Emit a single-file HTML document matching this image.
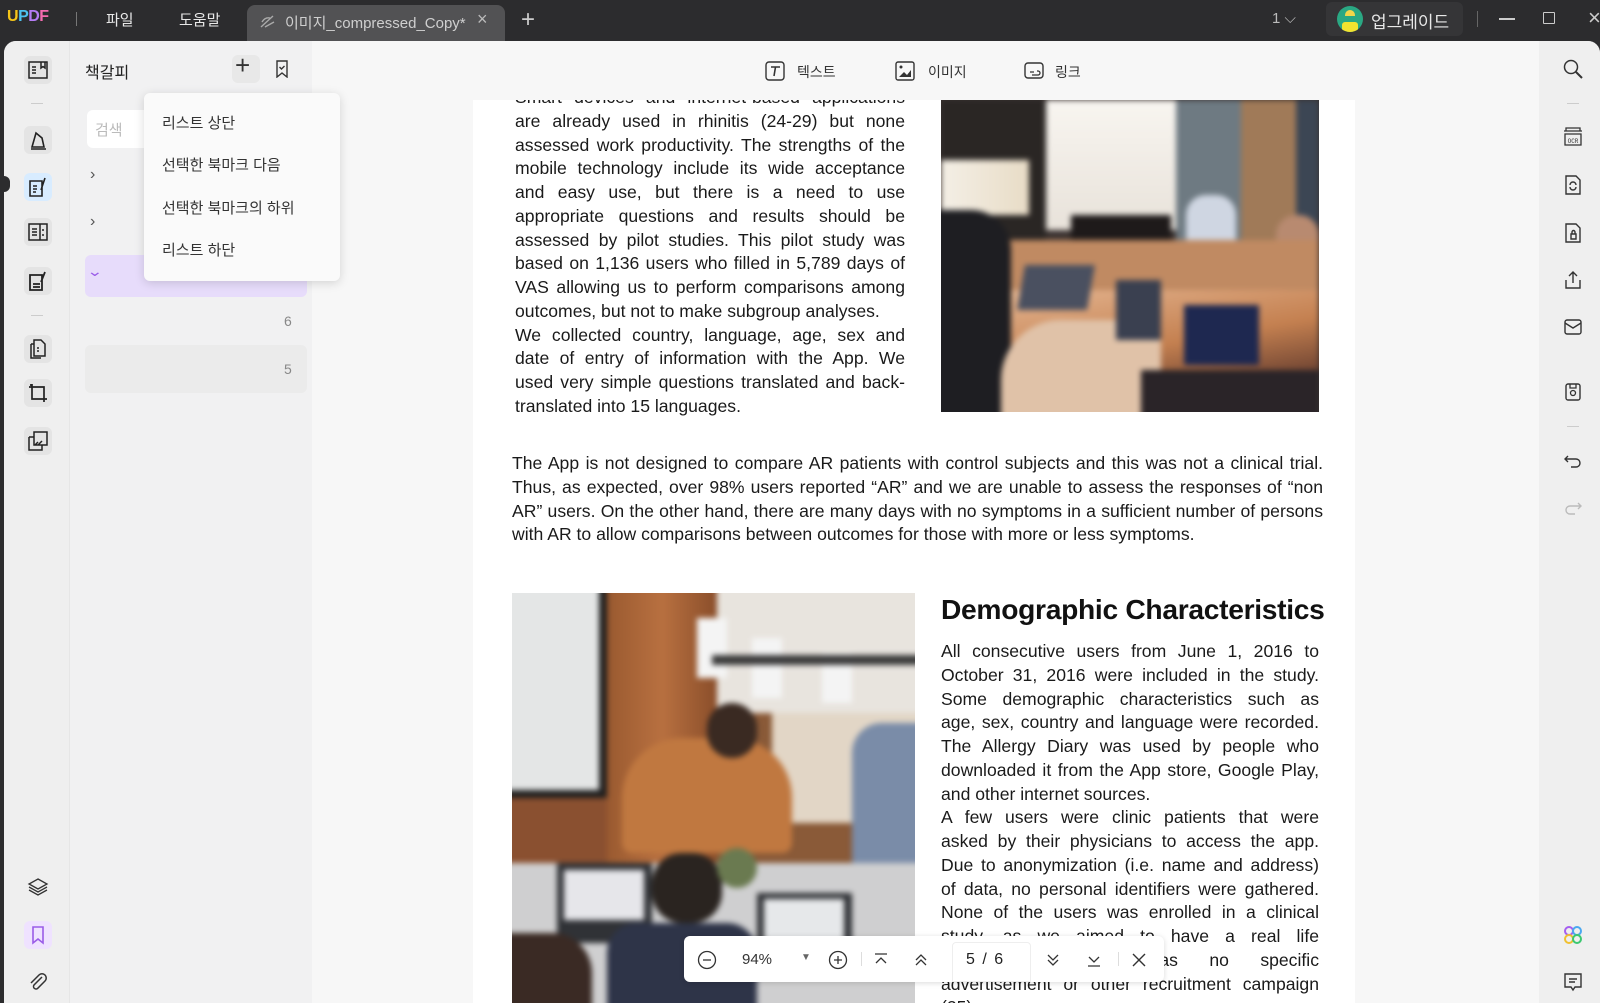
<!DOCTYPE html>
<html><head><meta charset="utf-8">
<style>
*{margin:0;padding:0;box-sizing:border-box}
body{width:1600px;height:1003px;overflow:hidden;background:#2c2c2e;font-family:"Liberation Sans","Noto Sans CJK KR",sans-serif;position:relative}
.abs{position:absolute}
.tb{color:#e8e8e8;font-size:15px}
.main{position:absolute;left:4px;top:41px;width:1596px;height:962px;background:#f7f7f7;border-radius:12px 12px 0 0;overflow:hidden}
.rail{position:absolute;left:0;top:0;width:66px;height:962px;background:#efefef;border-right:1px solid #e6e6e6}
.panel{position:absolute;left:66px;top:0;width:242px;height:962px;background:#f1f1f2}
.rrail{position:absolute;left:1535px;top:0;width:61px;height:962px;background:#efefef}
.page{position:absolute;left:473px;top:100px;width:882px;height:903px;background:#fff}
.txt{font-family:"Liberation Sans",sans-serif;color:#1a1a1a;font-size:17.6px;line-height:23.75px;text-align:justify;text-align-last:justify;position:absolute}
.txt div{white-space:nowrap;text-align:justify;text-align-last:justify}
.ic{position:absolute;width:22px;height:22px}
.menu div{position:absolute;left:18px;font-size:15px;color:#333}
.blur{position:absolute;left:-10px;top:-10px;right:-10px;bottom:-10px;filter:blur(3px)}
.blur>div{position:absolute}
</style></head><body>
<div class="abs" style="left:7px;top:8px;font-weight:bold;font-size:16px;letter-spacing:-0.5px"><span style="color:#f5c518">U</span><span style="color:#4cc3f0">P</span><span style="color:#b57cf5">D</span><span style="color:#f56bb0">F</span></div>
<div class="abs" style="left:76px;top:12px;width:1px;height:14px;background:#777"></div>
<div class="abs tb" style="left:106px;top:9px">파일</div>
<div class="abs tb" style="left:179px;top:9px">도움말</div>
<div class="abs" style="left:247px;top:5px;width:258px;height:36px;background:#525254;border-radius:8px 8px 0 0"></div>
<svg class="abs" style="left:259px;top:14px" width="18" height="16" viewBox="0 0 18 16"><path d="M2 13 L14 2 M3 8 Q6 3 11 4 M6 13 L15 8" stroke="#aaa" stroke-width="1.4" fill="none"/></svg>
<div class="abs" style="left:285px;top:12px;color:#cfcfcf;font-size:15px">이미지_compressed_Copy*</div>
<div class="abs" style="left:477px;top:9px;color:#bbb;font-size:18px">×</div>
<div class="abs" style="left:521px;top:6px;color:#ccc;font-size:24px;font-weight:300">+</div>
<div class="abs tb" style="left:1272px;top:10px;color:#bbb">1 ⌵</div>
<div class="abs" style="left:1326px;top:2px;width:137px;height:34px;background:#353537;border-radius:6px"></div>
<div class="abs" style="left:1337px;top:6px;width:26px;height:26px;border-radius:50%;background:#2aa883;overflow:hidden"><div style="position:absolute;left:5px;top:16px;width:16px;height:10px;background:#f2e330;border-radius:3px"></div><div style="position:absolute;left:8px;top:4px;width:10px;height:6px;background:#f2d64a;border-radius:5px 5px 0 0"></div></div>
<div class="abs tb" style="left:1371px;top:8px;font-size:17px">업그레이드</div>
<div class="abs" style="left:1477px;top:11px;width:1px;height:16px;background:#666"></div>
<div class="abs" style="left:1499px;top:18px;width:16px;height:1.5px;background:#ccc"></div>
<div class="abs" style="left:1543px;top:12px;width:12px;height:12px;border:1.5px solid #ccc;border-radius:1px"></div>
<div class="abs" style="left:1588px;top:5px;color:#ccc;font-size:22px">×</div>

<div class="main">
 <div class="rail">
  <div class="abs" style="left:20px;top:15px;width:28px;height:28px;background:#e4e4e4;border-radius:6px"></div>
  <svg class="ic" style="left:23px;top:18px" viewBox="0 0 22 22"><path d="M2 3h18v16H2z M5 8h4 M5 11h4 M5 14h4 M14 3v6l2-1.5 2 1.5V3" stroke="#222" stroke-width="1.5" fill="none"/></svg>
  <div class="abs" style="left:27px;top:62px;width:12px;height:1px;background:#ccc"></div>
  <div class="abs" style="left:20px;top:85px;width:28px;height:28px;background:#e4e4e4;border-radius:6px"></div>
  <svg class="ic" style="left:23px;top:88px" viewBox="0 0 22 22"><path d="M5 18 L9 4 L15 9 L17 18z M4 20h15" stroke="#222" stroke-width="1.6" fill="none"/></svg>
  <div class="abs" style="left:20px;top:132px;width:28px;height:28px;background:#d8ecff;border-radius:6px"></div>
  <svg class="ic" style="left:23px;top:135px" viewBox="0 0 22 22"><path d="M3 5h12v15H3z M6 10h4 M6 13h4 M6 16h3 M18 2 L14 14" stroke="#222" stroke-width="1.6" fill="none"/></svg>
  <div class="abs" style="left:0;top:135px;width:6px;height:16px;background:#2c2c2e;border-radius:0 8px 8px 0"></div>
  <div class="abs" style="left:20px;top:177px;width:28px;height:28px;background:#e4e4e4;border-radius:6px"></div>
  <svg class="ic" style="left:23px;top:180px" viewBox="0 0 22 22"><path d="M2 3h18v16H2z M13 3v16 M5 8h5 M5 11h5 M5 14h5 M16 8v2 M16 13v2" stroke="#222" stroke-width="1.5" fill="none"/></svg>
  <div class="abs" style="left:20px;top:226px;width:28px;height:28px;background:#e4e4e4;border-radius:6px"></div>
  <svg class="ic" style="left:23px;top:229px" viewBox="0 0 22 22"><path d="M3 5h12v15H3z M6 14h7 M6 17h7 M18 2 L14 12" stroke="#222" stroke-width="1.8" fill="none"/></svg>
  <div class="abs" style="left:27px;top:274px;width:12px;height:1px;background:#ccc"></div>
  <div class="abs" style="left:20px;top:294px;width:28px;height:28px;background:#e4e4e4;border-radius:6px"></div>
  <svg class="ic" style="left:23px;top:297px" viewBox="0 0 22 22"><path d="M7 2h7l4 4v12H7z M4 6h3 M4 6v14h10 M10 10h2 M10 13h2" stroke="#222" stroke-width="1.5" fill="none"/></svg>
  <div class="abs" style="left:20px;top:338px;width:28px;height:28px;background:#e4e4e4;border-radius:6px"></div>
  <svg class="ic" style="left:23px;top:341px" viewBox="0 0 22 22"><path d="M5 2v15h15 M2 5h15v15 M3 3l2 0" stroke="#222" stroke-width="1.7" fill="none"/></svg>
  <div class="abs" style="left:20px;top:386px;width:28px;height:28px;background:#e4e4e4;border-radius:6px"></div>
  <svg class="ic" style="left:23px;top:389px" viewBox="0 0 22 22"><path d="M7 2h13v13H7z M2 7h5 M2 7v13h13v-5 M8 15l3-3 M11 15l4-4" stroke="#222" stroke-width="1.5" fill="none"/></svg>
  <svg class="ic" style="left:23px;top:835px" viewBox="0 0 22 22"><path d="M11 3 L20 8 L11 13 L2 8z M2 11 L11 16 L20 11 M2 14 L11 19 L20 14" stroke="#333" stroke-width="1.3" fill="none"/></svg>
  <div class="abs" style="left:20px;top:880px;width:28px;height:28px;background:#efe2ff;border-radius:6px"></div>
  <svg class="ic" style="left:23px;top:883px" viewBox="0 0 22 22"><path d="M6 3h10v16l-5-4-5 4z" stroke="#9a5ce8" stroke-width="1.6" fill="none"/></svg>
  <svg class="ic" style="left:23px;top:930px" viewBox="0 0 22 22"><path d="M15 6 L7 14 a2.5 2.5 0 0 0 3.5 3.5 L18 10 a4 4 0 0 0-6-6 L4 12" stroke="#333" stroke-width="1.5" fill="none"/></svg>
 </div>
 <div class="panel">
  <div class="abs" style="left:15px;top:18px;font-size:16px;color:#222">책갈피</div>
  <div class="abs" style="left:162px;top:14px;width:28px;height:28px;background:#e8e8e8;border-radius:6px"></div>
  <div class="abs" style="left:165px;top:9px;font-size:26px;color:#333;font-weight:300">+</div>
  <svg class="abs" style="left:205px;top:19px" width="14" height="18" viewBox="0 0 14 18"><path d="M2 1h10v16l-5-4-5 4z M4.5 7l2 2 3-3" stroke="#333" stroke-width="1.4" fill="none"/></svg>
  <div class="abs" style="left:17px;top:69px;width:80px;height:38px;background:#fff;border-radius:6px"></div>
  <div class="abs" style="left:25px;top:78px;color:#bbb;font-size:15px">검색</div>
  <div class="abs" style="left:20px;top:125px;color:#555;font-size:16px">›</div>
  <div class="abs" style="left:20px;top:172px;color:#555;font-size:16px">›</div>
  <div class="abs" style="left:15px;top:214px;width:222px;height:42px;background:#e7dcfb;border-radius:6px"></div>
  <div class="abs" style="left:19px;top:222px;color:#9a5ce8;font-size:14px;transform:scaleX(1.4)">⌄</div>
  <div class="abs" style="left:214px;top:272px;color:#888;font-size:14px">6</div>
  <div class="abs" style="left:15px;top:304px;width:222px;height:48px;background:#ebebeb;border-radius:6px"></div>
  <div class="abs" style="left:214px;top:320px;color:#888;font-size:14px">5</div>
 </div>
 <div class="menu abs" style="left:140px;top:52px;width:196px;height:188px;background:#fafafa;border-radius:6px;box-shadow:0 2px 10px rgba(0,0,0,0.15)">
  <div style="top:19px">리스트 상단</div>
  <div style="top:61px">선택한 북마크 다음</div>
  <div style="top:104px">선택한 북마크의 하위</div>
  <div style="top:146px">리스트 하단</div>
 </div>
 <svg class="abs" style="left:760px;top:19px" width="22" height="22" viewBox="0 0 22 22"><rect x="2" y="2" width="18" height="18" rx="3" stroke="#333" stroke-width="1.4" fill="none"/><path d="M7 7h9 M11.5 7 L10 16" stroke="#333" stroke-width="1.6" fill="none"/></svg>
 <div class="abs" style="left:793px;top:21px;font-size:14px;color:#333">텍스트</div>
 <svg class="abs" style="left:890px;top:19px" width="22" height="22" viewBox="0 0 22 22"><rect x="2" y="2" width="18" height="18" rx="2" stroke="#333" stroke-width="1.4" fill="none"/><path d="M5 17 L10 12 L13 15 L17 10 V17z" fill="#333"/><circle cx="7" cy="7" r="1.5" fill="#333"/></svg>
 <div class="abs" style="left:924px;top:21px;font-size:14px;color:#333">이미지</div>
 <svg class="abs" style="left:1019px;top:19px" width="22" height="22" viewBox="0 0 22 22"><rect x="2" y="3" width="18" height="15" rx="3" stroke="#333" stroke-width="1.4" fill="none"/><path d="M7 12h4 M9 15h6 a2 2 0 0 0 0-4h-1" stroke="#333" stroke-width="1.3" fill="none"/></svg>
 <div class="abs" style="left:1051px;top:21px;font-size:14px;color:#333">링크</div>
 <div class="rrail">
  <svg class="ic" style="left:23px;top:17px" viewBox="0 0 22 22"><circle cx="9" cy="9" r="6.5" stroke="#333" stroke-width="1.5" fill="none"/><path d="M14 14 L20 20" stroke="#333" stroke-width="2"/></svg>
  <div class="abs" style="left:28px;top:62px;width:12px;height:1px;background:#ccc"></div>
  <svg class="ic" style="left:23px;top:85px" viewBox="0 0 22 22"><path d="M2 5h18 M4 5 V2h14v3 M3 8h16v11H3z" stroke="#333" stroke-width="1.3" fill="none"/><text x="11" y="17" font-size="6" text-anchor="middle" font-family="Liberation Mono" fill="#333">OCR</text></svg>
  <svg class="ic" style="left:23px;top:133px" viewBox="0 0 22 22"><path d="M4 2h10l4 4v14H4z M8 11 a3 3 0 0 1 6 0 M14 13 a3 3 0 0 1-6 0" stroke="#333" stroke-width="1.4" fill="none"/></svg>
  <svg class="ic" style="left:23px;top:181px" viewBox="0 0 22 22"><path d="M4 2h10l4 4v14H4z M9 12h5v5H9z M10 12v-2 a1.5 1.5 0 0 1 3 0v2" stroke="#333" stroke-width="1.4" fill="none"/></svg>
  <svg class="ic" style="left:23px;top:228px" viewBox="0 0 22 22"><path d="M11 3v11 M7 7l4-4 4 4 M4 11v8h14v-8" stroke="#333" stroke-width="1.4" fill="none"/></svg>
  <svg class="ic" style="left:23px;top:275px" viewBox="0 0 22 22"><rect x="3" y="4" width="16" height="14" rx="2" stroke="#333" stroke-width="1.4" fill="none"/><path d="M3 7l8 5 8-5" stroke="#333" stroke-width="1.4" fill="none"/></svg>
  <svg class="ic" style="left:23px;top:340px" viewBox="0 0 22 22"><rect x="4" y="3" width="14" height="16" rx="2" stroke="#333" stroke-width="1.4" fill="none"/><circle cx="11" cy="12" r="2.5" stroke="#333" stroke-width="1.3" fill="none"/><path d="M8 3v4h6V3" stroke="#333" stroke-width="1.3" fill="none"/></svg>
  <div class="abs" style="left:28px;top:385px;width:12px;height:1px;background:#ccc"></div>
  <svg class="ic" style="left:23px;top:409px" viewBox="0 0 22 22"><path d="M6 6 L3 9 L6 12 M3 9 H14 a4 4 0 0 1 0 8 H9" stroke="#333" stroke-width="1.4" fill="none"/></svg>
  <svg class="ic" style="left:23px;top:456px" viewBox="0 0 22 22"><path d="M16 6 L19 9 L16 12 M19 9 H8 a4 4 0 0 0 0 8 H13" stroke="#bbb" stroke-width="1.4" fill="none"/></svg>
  <svg class="ic" style="left:23px;top:883px" viewBox="0 0 22 22"><circle cx="7" cy="7" r="4" stroke="#a55ef0" stroke-width="2" fill="none"/><circle cx="15" cy="7" r="4" stroke="#4aa8f0" stroke-width="2" fill="none"/><circle cx="7" cy="15" r="4" stroke="#f0c030" stroke-width="2" fill="none"/><circle cx="15" cy="15" r="4" stroke="#3cc870" stroke-width="2" fill="none"/></svg>
  <svg class="ic" style="left:23px;top:930px" viewBox="0 0 22 22"><path d="M3 3h16v13h-6l-2 3-2-3H3z M7 8h8 M7 11h6" stroke="#333" stroke-width="1.4" fill="none"/></svg>
 </div>
</div>

<div class="page" style="top:100px"></div>
<div class="abs" style="left:473px;top:100px;width:882px;height:903px;overflow:hidden">
 <div class="txt" style="left:42px;top:-14px;width:390px">
  <div>Smart devices and internet-based applications</div>
  <div>are already used in rhinitis (24-29) but none</div>
  <div>assessed work productivity. The strengths of the</div>
  <div>mobile technology include its wide acceptance</div>
  <div>and easy use, but there is a need to use</div>
  <div>appropriate questions and results should be</div>
  <div>assessed by pilot studies. This pilot study was</div>
  <div>based on 1,136 users who filled in 5,789 days of</div>
  <div>VAS allowing us to perform comparisons among</div>
  <div style="text-align-last:left">outcomes, but not to make subgroup analyses.</div>
  <div>We collected country, language, age, sex and</div>
  <div>date of entry of information with the App. We</div>
  <div>used very simple questions translated and back-</div>
  <div style="text-align-last:left">translated into 15 languages.</div>
 </div>
 <div class="txt" style="left:39px;top:352px;width:811px">
  <div>The App is not designed to compare AR patients with control subjects and this was not a clinical trial.</div>
  <div>Thus, as expected, over 98% users reported “AR” and we are unable to assess the responses of “non</div>
  <div>AR” users. On the other hand, there are many days with no symptoms in a sufficient number of persons</div>
  <div style="text-align-last:left">with AR to allow comparisons between outcomes for those with more or less symptoms.</div>
 </div>
 <div class="abs" style="left:468px;top:493px;font-weight:bold;font-size:28.2px;color:#111;white-space:nowrap;letter-spacing:-0.3px">Demographic Characteristics</div>
 <div class="txt" style="left:468px;top:540px;width:378px">
  <div>All consecutive users from June 1, 2016 to</div>
  <div>October 31, 2016 were included in the study.</div>
  <div>Some demographic characteristics such as</div>
  <div>age, sex, country and language were recorded.</div>
  <div>The Allergy Diary was used by people who</div>
  <div>downloaded it from the App store, Google Play,</div>
  <div style="text-align-last:left">and other internet sources.</div>
  <div>A few users were clinic patients that were</div>
  <div>asked by their physicians to access the app.</div>
  <div>Due to anonymization (i.e. name and address)</div>
  <div>of data, no personal identifiers were gathered.</div>
  <div>None of the users was enrolled in a clinical</div>
  <div>study, as we aimed to have a real life</div>
  <div>study and there was no specific</div>
  <div>advertisement or other recruitment campaign</div>
  <div style="text-align-last:left">(25).</div>
 </div>
 <!-- photo 1 -->
 <div class="abs" style="left:468px;top:0;width:378px;height:312px;background:#3a3230;overflow:hidden">
  <div class="blur">
  <div style="left:10px;top:10px;width:105px;height:312px;background:#2a2624"></div>
  <div style="left:10px;top:70px;width:88px;height:55px;background:linear-gradient(90deg,#f4efe6,#e8dcc6)"></div>
  <div style="left:115px;top:10px;width:130px;height:130px;background:linear-gradient(#f8f5f0,#e8e2da)"></div>
  <div style="left:245px;top:10px;width:65px;height:140px;background:#6e7a82"></div>
  <div style="left:310px;top:10px;width:55px;height:170px;background:#a07a58"></div>
  <div style="left:365px;top:10px;width:23px;height:170px;background:#3c4654"></div>
  <div style="left:140px;top:125px;width:100px;height:45px;background:#1e1a1a"></div>
  <div style="left:255px;top:105px;width:50px;height:70px;background:#cfd6e2;border-radius:20px 20px 0 0"></div>
  <div style="left:345px;top:125px;width:43px;height:90px;background:#b88a70;border-radius:20px 20px 0 0"></div>
  <div style="left:50px;top:150px;width:338px;height:60px;background:#c08a62"></div>
  <div style="left:50px;top:200px;width:338px;height:85px;background:linear-gradient(170deg,#e6b894,#c48050 60%,#6a4030)"></div>
  <div style="left:0;top:120px;width:80px;height:212px;background:#1e1e22;border-radius:0 40px 0 0"></div>
  <div style="left:70px;top:230px;width:160px;height:102px;background:#e0c2a8;border-radius:60px 0 0 0"></div>
  <div style="left:90px;top:175px;width:70px;height:45px;background:#4a5060;transform:skewX(-10deg)"></div>
  <div style="left:185px;top:190px;width:45px;height:60px;background:#3a4050"></div>
  <div style="left:253px;top:215px;width:75px;height:60px;background:#1e2850"></div>
  <div style="left:210px;top:280px;width:178px;height:52px;background:#2a2428"></div>
  </div>
 </div>
 <!-- photo 2 -->
 <div class="abs" style="left:39px;top:493px;width:403px;height:410px;background:#8a5a38;overflow:hidden">
  <div class="blur">
  <div style="left:0;top:0;width:105px;height:215px;background:#e4e6e6;border-right:8px solid #1e1e1e;border-bottom:8px solid #1e1e1e"></div>
  <div style="left:105px;top:0;width:110px;height:300px;background:linear-gradient(90deg,#9a5a30,#b87040,#8a4e2a)"></div>
  <div style="left:215px;top:0;width:208px;height:130px;background:#e8e4de"></div>
  <div style="left:195px;top:35px;width:30px;height:60px;background:#f4f4f4"></div>
  <div style="left:250px;top:55px;width:30px;height:60px;background:#f4f4f4"></div>
  <div style="left:320px;top:70px;width:30px;height:50px;background:#f4f4f4"></div>
  <div style="left:210px;top:72px;width:213px;height:10px;background:#3a3a3a"></div>
  <div style="left:270px;top:130px;width:153px;height:110px;background:#e2d6c6"></div>
  <div style="left:0;top:215px;width:105px;height:90px;background:#8a5030"></div>
  <div style="left:120px;top:155px;width:170px;height:115px;background:#c07840;border-radius:60px 60px 10px 10px"></div>
  <div style="left:205px;top:120px;width:50px;height:55px;background:#3a2a22;border-radius:25px"></div>
  <div style="left:350px;top:140px;width:73px;height:170px;background:#7a8ca8;border-radius:30px 0 0 0"></div>
  <div style="left:0;top:280px;width:423px;height:150px;background:#cfcfd0"></div>
  <div style="left:55px;top:280px;width:95px;height:80px;background:#303236"></div>
  <div style="left:62px;top:287px;width:80px;height:50px;background:#e6e6ea"></div>
  <div style="left:255px;top:310px;width:95px;height:70px;background:#303236"></div>
  <div style="left:262px;top:316px;width:80px;height:48px;background:#e6e8ea"></div>
  <div style="left:150px;top:270px;width:70px;height:70px;background:#2a2420;border-radius:30px"></div>
  <div style="left:105px;top:340px;width:150px;height:90px;background:#2e3448;border-radius:30px 30px 0 0"></div>
  <div style="left:215px;top:265px;width:40px;height:40px;background:#6a7a50;border-radius:20px"></div>
  <div style="left:0;top:350px;width:90px;height:80px;background:#3a2a24;border-radius:0 40px 0 0"></div>
  </div>
 </div>
</div>

<div class="abs" style="left:684px;top:936px;width:480px;height:46px;background:#fff;border-radius:6px;box-shadow:0 1px 6px rgba(0,0,0,0.15)">
 <svg class="abs" style="left:13px;top:14px" width="20" height="20" viewBox="0 0 20 20"><circle cx="10" cy="10" r="8.5" stroke="#333" stroke-width="1.3" fill="none"/><path d="M6 10h8" stroke="#333" stroke-width="1.3"/></svg>
 <div class="abs" style="left:58px;top:15px;font-size:15px;color:#333">94%</div>
 <div class="abs" style="left:117px;top:16px;font-size:10px;color:#666">▼</div>
 <svg class="abs" style="left:144px;top:14px" width="20" height="20" viewBox="0 0 20 20"><circle cx="10" cy="10" r="8.5" stroke="#333" stroke-width="1.3" fill="none"/><path d="M6 10h8 M10 6v8" stroke="#333" stroke-width="1.3"/></svg>
 <div class="abs" style="left:177px;top:16px;width:1px;height:14px;background:#ddd"></div>
 <svg class="abs" style="left:188px;top:15px" width="18" height="18" viewBox="0 0 18 18"><path d="M3 3h12 M4 12 L9 7 L14 12" stroke="#333" stroke-width="1.3" fill="none"/></svg>
 <svg class="abs" style="left:228px;top:15px" width="18" height="18" viewBox="0 0 18 18"><path d="M4 9 L9 4 L14 9 M4 14 L9 9 L14 14" stroke="#333" stroke-width="1.3" fill="none"/></svg>
 <div class="abs" style="left:268px;top:6px;width:79px;height:40px;border:1px solid #eee;border-radius:4px 4px 0 0"></div>
 <div class="abs" style="left:282px;top:15px;font-size:16px;color:#222;word-spacing:3px">5 / 6</div>
 <svg class="abs" style="left:360px;top:15px" width="18" height="18" viewBox="0 0 18 18"><path d="M4 4 L9 9 L14 4 M4 9 L9 14 L14 9" stroke="#333" stroke-width="1.3" fill="none"/></svg>
 <svg class="abs" style="left:401px;top:15px" width="18" height="18" viewBox="0 0 18 18"><path d="M4 6 L9 11 L14 6 M3 15h12" stroke="#333" stroke-width="1.3" fill="none"/></svg>
 <div class="abs" style="left:434px;top:16px;width:1px;height:14px;background:#ddd"></div>
 <svg class="abs" style="left:446px;top:15px" width="18" height="18" viewBox="0 0 18 18"><path d="M3 3 L15 15 M15 3 L3 15" stroke="#333" stroke-width="1.4"/></svg>
</div>
</body></html>
